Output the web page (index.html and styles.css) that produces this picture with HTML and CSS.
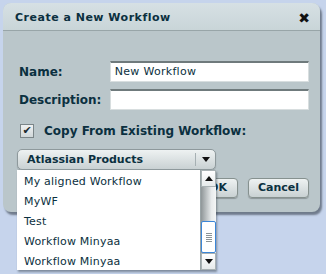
FILE: index.html
```html
<!DOCTYPE html>
<html>

<head>
    <meta charset="UTF-8">
    <title>Create a New Workflow</title>
    <link rel="stylesheet" href="styles.css">
</head>

<body>

    <div class="page">
        <div class="dialog">
            <div class="header">
                <div class="title">Create a New Workflow</div>
                <div class="close">&#10006;</div>
            </div>
            <div class="content">
                <div class="row">
                    <div class="label">Name:</div>
                    <div class="input">New Workflow</div>
                </div>
                <div class="row">
                    <div class="label">Description:</div>
                    <div class="input"></div>
                </div>
                <div class="check_row">
                    <div class="checkbox">&#10004;</div>
                    <div class="check_label">Copy From Existing Workflow:</div>
                </div>
                <div class="select_wrap">
                    <div class="select">
                        <div class="select_text">Atlassian Products</div>
                        <div class="select_arrow"><span class="tri_down"></span></div>
                    </div>
                    <!-- 打开的下拉列表 -->
                    <div class="dropdown">
                        <div class="list">
                            <div class="item">My aligned Workflow</div>
                            <div class="item">MyWF</div>
                            <div class="item">Test</div>
                            <div class="item">Workflow Minyaa</div>
                            <div class="item">Workflow Minyaa</div>
                        </div>
                        <div class="scrollbar">
                            <div class="sb_btn"><span class="tri_up"></span></div>
                            <div class="sb_track">
                                <div class="sb_thumb">
                                    <div class="grip"></div>
                                    <div class="grip"></div>
                                    <div class="grip"></div>
                                    <div class="grip"></div>
                                    <div class="grip"></div>
                                </div>
                            </div>
                            <div class="sb_btn"><span class="tri_down"></span></div>
                        </div>
                    </div>
                </div>
                <div class="buttons">
                    <div class="btn btn_ok">OK</div>
                    <div class="btn btn_cancel">Cancel</div>
                </div>
            </div>
        </div>
    </div>

</body>

</html>
```

FILE: styles.css
```css
html,
body {
    margin: 0;
    padding: 0;
    background-color: #c6d4ec;
}

body {
    font-family: "DejaVu Sans", Verdana, sans-serif;
    color: #0b3040;
}

.page {
    padding: 3px;
    height: 268px;
}

.dialog {
    width: 317px;
    height: 209px;
    border-radius: 8px;
    background-color: #bac6ca;
    box-shadow: 2px 3px 2px rgba(40, 50, 60, 0.55);
}

.header {
    height: 27px;
    display: flex;
    align-items: center;
    justify-content: space-between;
    padding: 0 10px 0 12px;
    border-radius: 8px 8px 0 0;
    border-bottom: 1px solid #98a5a8;
    background: linear-gradient(#d6e0e4, #c9d5d8);
}

.title {
    font-size: 11px;
    font-weight: bold;
    letter-spacing: 0.5px;
    padding-top: 2px;
}

.close {
    font-size: 14px;
    font-weight: bold;
    color: #111;
    padding-top: 2px;
}

.content {
    padding: 30px 11px 0 14px;
}

.row {
    display: flex;
    align-items: center;
    height: 21px;
    margin-bottom: 7px;
}

.label {
    width: 91px;
    margin-left: 2px;
    font-size: 12px;
    font-weight: bold;
}

.input {
    width: 194px;
    height: 18px;
    line-height: 18px;
    background-color: white;
    border: 1px solid #d8dedf;
    border-top: 2px solid #6f7a7c;
    padding-left: 4px;
    font-size: 11px;
    letter-spacing: 0.3px;
}

.check_row {
    display: flex;
    align-items: center;
    margin-top: 14px;
    height: 14px;
}

.checkbox {
    width: 12px;
    height: 12px;
    border: 1px solid #7b8588;
    background: linear-gradient(#eef1f2, #d0d7d9);
    font-size: 11px;
    line-height: 12px;
    text-align: center;
    color: #1c2a30;
    margin-left: 3px;
}

.check_label {
    margin-left: 10px;
    font-size: 12px;
    font-weight: bold;
}

.select_wrap {
    position: relative;
    width: 199px;
    margin-top: 11px;
}

.select {
    display: flex;
    height: 19px;
    border: 1px solid #8e999c;
    border-radius: 5px;
    background: linear-gradient(#eef2f2, #c9d1d3);
    box-shadow: 0 1px 1px rgba(0, 0, 0, 0.2);
}

.select_text {
    flex: 1;
    padding-left: 9px;
    font-size: 11px;
    font-weight: bold;
    line-height: 19px;
}

.select_arrow {
    width: 19px;
    margin: 3px 0;
    border-left: 1px solid #a6b0b3;
    display: flex;
    align-items: center;
    justify-content: center;
}

.tri_down {
    width: 0;
    height: 0;
    border-left: 4px solid transparent;
    border-right: 4px solid transparent;
    border-top: 5px solid #111;
}

.tri_up {
    width: 0;
    height: 0;
    border-left: 4px solid transparent;
    border-right: 4px solid transparent;
    border-bottom: 5px solid #111;
}

.dropdown {
    position: absolute;
    top: 21px;
    left: 0;
    width: 199px;
    height: 100px;
    display: flex;
    background-color: white;
    box-shadow: 1px 2px 2px rgba(40, 50, 60, 0.45);
    z-index: 2;
}

.list {
    flex: 1;
    padding-top: 2px;
}

.item {
    height: 20px;
    line-height: 20px;
    padding-left: 7px;
    font-size: 11px;
    letter-spacing: 0.2px;
}

.scrollbar {
    width: 15px;
    display: flex;
    flex-direction: column;
    border-left: 1px solid #9aa4a6;
}

.sb_btn {
    height: 15px;
    display: flex;
    align-items: center;
    justify-content: center;
    background: linear-gradient(#ffffff, #e6eaeb);
    border: 1px solid #a9b2b4;
}

.sb_track {
    flex: 1;
    display: flex;
    flex-direction: column;
    justify-content: flex-end;
    background: linear-gradient(to right, #8f9698, #e8ebec 70%, #f4f6f6);
}

.sb_thumb {
    height: 30px;
    border: 1px solid #3b86d8;
    border-radius: 2px;
    background: white;
    display: flex;
    flex-direction: column;
    align-items: center;
    justify-content: center;
    gap: 1px;
}

.grip {
    width: 6px;
    height: 1px;
    background-color: #8c9496;
}

.buttons {
    display: flex;
    justify-content: flex-end;
    gap: 10px;
    margin-top: 8px;
}

.btn {
    height: 18px;
    line-height: 18px;
    border: 1px solid #86918f;
    border-radius: 4px;
    background: linear-gradient(#eef2f2, #c9d1d3);
    box-shadow: 0 1px 1px rgba(0, 0, 0, 0.25);
    text-align: center;
    font-size: 11px;
    font-weight: bold;
}

.btn_ok {
    width: 38px;
}

.btn_cancel {
    width: 59px;
}
```
